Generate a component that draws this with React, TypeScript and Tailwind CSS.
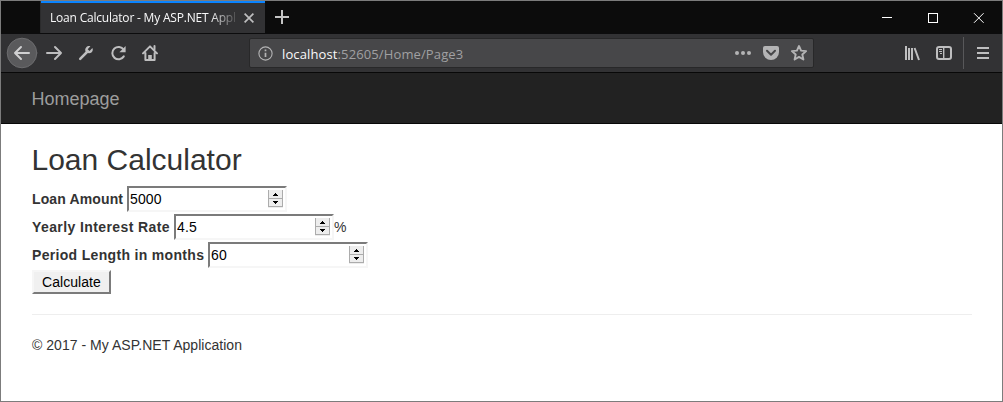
import React from "react";

function TitleBar() {
  return (
    <div className="flex h-[32px] shrink-0 bg-[#0c0c0c]">
      <div className="w-[39px] shrink-0" />
      <div className="flex w-[225px] shrink-0 items-center border-l border-[#2b2b2c] border-t-0 bg-[#323234] shadow-[inset_0_2px_0_#0a84ff]">
        <div className="ml-[9px] w-[187px] whitespace-nowrap pt-[2px] font-['Open_Sans','Noto_Sans',sans-serif] text-[12px] leading-[18px] tracking-[-0.2px] text-[#f9f9fa] [mask-image:linear-gradient(to_right,black_160px,transparent_190px)]">
          Loan Calculator - My ASP.NET Appl
        </div>
        <svg className="ml-[7px] mt-[2px]" width="10" height="10" viewBox="0 0 10 10" fill="none" stroke="#bebebf" strokeWidth="1.7">
          <path d="M.6.6 9.4 9.4M9.4.6.6 9.4" />
        </svg>
      </div>
      <svg className="ml-[10px] mt-[9px]" width="14" height="14" viewBox="0 0 14 14" fill="none" stroke="#c4c4c4" strokeWidth="2">
        <path d="M7 0v14M0 7h14" />
      </svg>
      <svg className="ml-auto mr-[18px] mt-[12px]" width="102" height="11" viewBox="0 0 102 11" fill="none" stroke="#fff" strokeWidth="1">
        <path d="M0 4.5h10M46.5.5h9v9h-9z" shapeRendering="crispEdges" />
        <path d="M92 .2l9.6 9.6M101.6.2 92 9.8" />
      </svg>
    </div>
  );
}

function Toolbar() {
  return (
    <div className="flex h-[39px] shrink-0 items-center border-t border-[#0c0c0d] bg-[#323234]">
      <svg className="shrink-0" width="160" height="38" viewBox="1 34 160 38" fill="none" stroke="#bebebf" strokeWidth="2" strokeLinecap="round" strokeLinejoin="round">
        <circle cx="22" cy="53" r="14.8" fill="#5a5a5c" stroke="#6c6c6e" strokeWidth="1" />
        <path d="M29 53H15M21 47l-6 6 6 6" stroke="#d0d0d1" />
        <path d="M47 53h14M55 47l6 6-6 6" />
        <path d="M80.2 58.8 87 52" strokeWidth="2.5" />
        <path d="M92.4 48.1l-2.9 2.8-1.8-1.7 2.7-3c-2.5-1-5.9 1.3-5 4.8.9 3.1 7.8 3.2 7.4-1.7z" fill="#bebebf" stroke="none" />
        <path d="M123.8 56.4a6.2 6.2 0 1 1-.1-6.7" />
        <path d="M125.6 46v6.2h-6.2z" fill="#bebebf" stroke="none" />
        <path d="M143 53.4 150 46.4 157 53.4M145.4 53v7h9.2v-7" />
        <path d="M148.2 55h3.6v5h-3.6z" fill="#bebebf" stroke="none" />
        <path d="M154.5 46v3.6" />
      </svg>
      <div className="ml-[88px] flex h-[30px] w-[565px] shrink-0 items-center rounded-[2px] border border-[#282829] bg-[#474749]">
        <svg className="ml-[8px]" width="15" height="15" viewBox="0 0 15 15" fill="none" stroke="#b4b4b5">
          <circle cx="7.5" cy="7.5" r="6.6" strokeWidth="1.1" />
          <path d="M7.5 6.8v4.2M7.5 3.5v1.7" strokeWidth="1.7" />
        </svg>
        <div className="ml-[9px] pt-[1px] font-['Open_Sans','Noto_Sans',sans-serif] text-[13px] leading-[20px] tracking-[0.12px] text-[#a0a0a2]">
          <span className="text-[#f9f9fa]">localhost</span>:52605/Home/Page3
        </div>
        <svg className="ml-auto mr-[5px]" width="74" height="18" viewBox="734 44 74 18" fill="none" stroke="#b4b4b5">
          <g fill="#b4b4b5" stroke="none">
            <circle cx="737" cy="53" r="2" />
            <circle cx="743" cy="53" r="2" />
            <circle cx="749" cy="53" r="2" />
            <path d="M765 46h12a2 2 0 0 1 2 2v4a8 8 0 0 1-16 0v-4a2 2 0 0 1 2-2z" />
          </g>
          <path d="M767 50.8l4 3.9 4-3.9" stroke="#474749" strokeWidth="2" strokeLinecap="round" strokeLinejoin="round" />
          <path d="M799 46l2.1 4.6 5 .5-3.8 3.4 1.1 5-4.4-2.6-4.4 2.6 1.1-5-3.8-3.4 5-.5z" strokeWidth="1.9" strokeLinejoin="round" />
        </svg>
      </div>
      <svg className="ml-auto shrink-0" width="102" height="38" viewBox="900 34 102 38" fill="none" stroke="#bebebf" strokeWidth="2">
        <path d="M906 46v14M909 48v12M912 48v12M914.6 48l4.4 12" />
        <rect x="937" y="47" width="14" height="12" rx="2" />
        <path d="M943.7 47v12" strokeWidth="1.4" />
        <path d="M939 49.5h3M939 51.5h3M940 53.5h2" strokeWidth="1" />
        <path d="M963.5 37v32" stroke="#58585a" strokeWidth="1" />
        <path d="M977 48h12M977 53h12M977 58h12" />
      </svg>
    </div>
  );
}

function NumberField({ value }: { value: string }) {
  return (
    <span className="flex h-[26px] w-[160px] shrink-0 items-center border-2 border-b-[#f6f6f6] border-l-[#7b7b7b] border-r-[#f6f6f6] border-t-[#7b7b7b] bg-white pl-px pr-[2px]">
      <input className="w-0 flex-1 bg-transparent p-0 text-[14px] leading-[20px] tracking-[0.15px] text-black outline-none" defaultValue={value} inputMode="decimal" />
      <svg width="15" height="18" viewBox="0 0 15 18" shapeRendering="crispEdges">
        <path d="M0 0h15v18H0z" fill="#ededed" />
        <path d="M0 0h1v17H0zM14 0h1v17h-1zM0 8h15v1H0zM0 16h15v1H0z" fill="#acacac" />
        <path d="M7 3h1v1h1v1h1v1H5V5h1V4h1zM5 11h5v1H9v1H8v1H7v-1H6v-1H5z" fill="#000" />
      </svg>
    </span>
  );
}

function Field({ label, labelClass, value, suffix }: { label: string; labelClass: string; value: string; suffix?: string }) {
  return (
    <label className="flex h-[28px] items-center whitespace-nowrap">
      <span className={`shrink-0 font-bold ${labelClass}`}>{label}</span>
      <NumberField value={value} />
      {suffix && <span>{suffix}</span>}
    </label>
  );
}

export default function App() {
  return (
    <div className="flex h-[402px] w-[1003px] flex-col overflow-hidden border border-[#7c7c7c] bg-white font-['Liberation_Sans',Arial,sans-serif] text-[14px] leading-[20px] text-[#333]">
      <TitleBar />
      <Toolbar />
      <nav className="flex h-[52px] shrink-0 items-center border-y border-[#080808] bg-[#222] pl-[30.5px] text-[18px] text-[#9d9d9d]">
        <a className="pt-[2px]">Homepage</a>
      </nav>
      <main className="pl-[31px] pr-[30px]">
        <h2 className="-ml-[0.5px] mb-[9px] mt-[19px] text-[30px] leading-[33px]">Loan Calculator</h2>
        <form>
          <Field label="Loan Amount" labelClass="w-[95px] tracking-[0.13px]" value="5000" />
          <Field label="Yearly Interest Rate" labelClass="w-[142px] tracking-[0.4px]" value="4.5" suffix="%" />
          <Field label="Period Length in months" labelClass="w-[176px] tracking-[0.32px]" value="60" />
          <button type="button" className="mt-px block h-[24px] w-[79px] border-2 border-b-[#7b7b7b] border-l-[#f6f6f6] border-r-[#7b7b7b] border-t-[#f6f6f6] bg-[#f0f0f0] leading-[20px] tracking-[0.05px] text-black">
            Calculate
          </button>
        </form>
        <hr className="my-[20px] border-[#eee]" />
        <footer className="tracking-[0.03px]">© 2017 - My ASP.NET Application</footer>
      </main>
    </div>
  );
}
